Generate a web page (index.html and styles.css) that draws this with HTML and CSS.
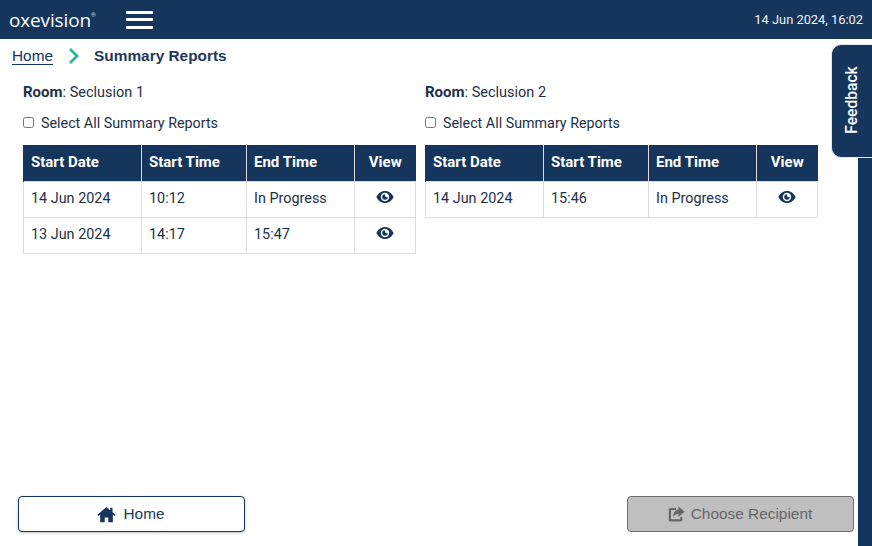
FILE: index.html
```html
<!DOCTYPE html>
<html lang="en">
<head>
<meta charset="utf-8">
<title>Summary Reports</title>
<link rel="stylesheet" href="styles.css">
</head>
<body>
<header class="topbar">
  <div class="brand"><span class="logo">oxevision</span><sup class="reg">®</sup></div>
  <button class="burger" aria-label="Menu"><span></span><span></span><span></span></button>
  <div class="clock">14 Jun 2024, 16:02</div>
</header>
<div class="strip"></div>
<a class="feedback"><span>Feedback</span></a>
<main class="page">
  <nav class="crumbs">
    <a class="crumb-link">Home</a>
    <svg class="chev" width="12" height="18" viewBox="0 0 12 18"><path d="M2 2 L9 9 L2 16" fill="none" stroke="#2fb593" stroke-width="2.8"/></svg>
    <strong class="crumb-current">Summary Reports</strong>
  </nav>
  <div class="rooms">
    <section class="room">
      <p class="room-title"><b>Room</b>: Seclusion 1</p>
      <label class="select-all"><input type="checkbox"><span>Select All Summary Reports</span></label>
      <table class="reports">
        <thead><tr><th class="c1">Start Date</th><th class="c2">Start Time</th><th class="c3">End Time</th><th class="c4">View</th></tr></thead>
        <tbody>
          <tr><td>14 Jun 2024</td><td>10:12</td><td>In Progress</td><td class="eye-cell"><svg class="eye" viewBox="0 0 18 14" width="18" height="14"><path fill-rule="evenodd" d="M9 1C5 1 2 3.6.4 7 2 10.4 5 13 9 13s7-2.6 8.600-6C16 3.600 13 1 9 1zm0 10.200A4.200 4.200 0 1 1 9 2.800a4.200 4.200 0 0 1 0 8.400z"/><path fill-rule="evenodd" d="M9 4.200A2.800 2.800 0 1 0 11.800 7c-.9.5-2 .2-2.500-.6-.5-.7-.5-1.500-.3-2.200z"/></svg></td></tr>
          <tr><td>13 Jun 2024</td><td>14:17</td><td>15:47</td><td class="eye-cell"><svg class="eye" viewBox="0 0 18 14" width="18" height="14"><path fill-rule="evenodd" d="M9 1C5 1 2 3.6.4 7 2 10.4 5 13 9 13s7-2.6 8.600-6C16 3.600 13 1 9 1zm0 10.200A4.200 4.200 0 1 1 9 2.800a4.200 4.200 0 0 1 0 8.400z"/><path fill-rule="evenodd" d="M9 4.200A2.800 2.800 0 1 0 11.800 7c-.9.5-2 .2-2.500-.6-.5-.7-.5-1.500-.3-2.200z"/></svg></td></tr>
        </tbody>
      </table>
    </section>
    <section class="room">
      <p class="room-title"><b>Room</b>: Seclusion 2</p>
      <label class="select-all"><input type="checkbox"><span>Select All Summary Reports</span></label>
      <table class="reports">
        <thead><tr><th class="c1">Start Date</th><th class="c2">Start Time</th><th class="c3">End Time</th><th class="c4">View</th></tr></thead>
        <tbody>
          <tr><td>14 Jun 2024</td><td>15:46</td><td>In Progress</td><td class="eye-cell"><svg class="eye" viewBox="0 0 18 14" width="18" height="14"><path fill-rule="evenodd" d="M9 1C5 1 2 3.6.4 7 2 10.4 5 13 9 13s7-2.6 8.600-6C16 3.600 13 1 9 1zm0 10.200A4.200 4.200 0 1 1 9 2.800a4.200 4.200 0 0 1 0 8.400z"/><path fill-rule="evenodd" d="M9 4.200A2.800 2.800 0 1 0 11.800 7c-.9.5-2 .2-2.500-.6-.5-.7-.5-1.500-.3-2.200z"/></svg></td></tr>
        </tbody>
      </table>
    </section>
  </div>
  <footer class="actions">
    <button class="btn btn-home">
      <svg class="btn-icon" viewBox="0 0 18 16" width="19" height="17"><path fill="#15355c" d="M9 .8 .4 8.300l1 1.100L3 8v7.400h4.300v-4.600h3.400v4.600H15V8l1.600 1.400 1-1.100-2.900-2.500V1.600h-2.200v2.300z"/></svg>
      <span>Home</span>
    </button>
    <button class="btn btn-recipient" disabled>
      <svg class="btn-icon" viewBox="0 0 17 16" width="17" height="16"><path fill="#666" d="M2.500 2h5.500v2H3v9.300h9.300V11h2v2.800c0 1-.7 1.700-1.700 1.700H2.500C1.500 15.500.8 14.800.8 13.800V3.700C.8 2.700 1.500 2 2.500 2z"/><path fill="#666" d="M10.500.5 16.500 5.800 10.500 11V8C7.800 8 6.300 8.700 5.300 11.500 5 7.300 7 3.800 10.500 3.500z"/></svg>
      <span>Choose Recipient</span>
    </button>
  </footer>
</main>
</body>
</html>
```
FILE: styles.css
```css
* { box-sizing: border-box; }
html, body { margin: 0; height: 100%; }
body {
  width: 872px;
  height: 546px;
  overflow: hidden;
  display: flex;
  flex-direction: column;
  position: relative;
  background: #fff;
  color: #1d2f49;
  font-family: Roboto, sans-serif;
  font-size: 14.3px;
}
.topbar {
  height: 39px;
  flex: none;
  background: #15355c;
  color: #fff;
  display: flex;
  align-items: center;
  padding: 0 9px;
}
.brand { display: flex; align-items: flex-start; width: 117px; }
.logo {
  font-family: "Open Sans", sans-serif;
  font-weight: 400;
  font-size: 19px;
  line-height: 20px;
  letter-spacing: -0.15px;
}
.reg { font-size: 6px; line-height: 8px; margin: 1px 0 0 0; color: #cfd6df; }
.burger {
  width: 27px;
  height: 18px;
  padding: 0;
  border: 0;
  background: none;
  display: flex;
  flex-direction: column;
  justify-content: space-between;
}
.burger span { display: block; height: 3px; background: #fff; border-radius: 1px; }
.clock { margin-left: auto; font-size: 12.85px; color: #f2f4f7; }
.strip {
  position: absolute;
  right: 0;
  top: 44px;
  bottom: 0;
  width: 14px;
  background: #15355c;
}
.feedback {
  position: absolute;
  right: 0;
  top: 44px;
  width: 41px;
  height: 114px;
  background: #15355c;
  border-radius: 10px 0 0 10px;
  border: 1px solid #e3e7ec;
  border-right: 0;
  color: #fff;
  font-weight: 500;
  font-size: 15.6px;
  display: flex;
  align-items: center;
  justify-content: center;
  padding-bottom: 2px;
}
.feedback span { transform: rotate(-90deg); white-space: nowrap; }
.page {
  flex: 1;
  display: flex;
  flex-direction: column;
  padding: 0 18px 14px 12px;
  min-height: 0;
}
.crumbs {
  height: 33px;
  display: flex;
  align-items: center;
  font-family: "Liberation Sans", sans-serif;
  font-size: 15.4px;
}
.crumb-link {
  color: #15355c;
  border-bottom: 1px solid #15355c;
  line-height: 16px;
  margin-top: 1px;
}
.chev { margin: 0 14px 0 15px; }
.crumb-current { color: #22385a; font-weight: 700; }
.rooms { display: flex; gap: 10px; padding-left: 11px; flex: 1; }
.room { width: 392px; }
.room-title { margin: 4px 0 0; line-height: 33px; height: 33px; font-size: 14.5px; }
.room-title b { font-weight: 700; font-size: 15px; }
.select-all {
  display: flex;
  align-items: center;
  height: 29px;
  margin-top: -1px;
  margin-bottom: 8px;
  gap: 7px;
}
.select-all input { margin: 0; width: 11px; height: 11px; }
.reports { border-collapse: collapse; width: 392px; table-layout: fixed; }
.reports th {
  background: #15355c;
  color: #fff;
  font-weight: 700;
  font-size: 15px;
  height: 36px;
  text-align: left;
  padding: 0 7px 2px;
  border-left: 1px solid #dcdcdc;
}
.reports th:first-child { border-left-color: #15355c; }
.reports th:last-child { text-align: center; padding: 0 0 2px; }
.reports td {
  height: 36px;
  font-size: 14.4px;
  padding: 0 7px 2px;
  border: 1px solid #dcdcdc;
}
.reports .eye-cell { text-align: center; padding: 0 0 4px; }
.eye { display: block; margin: 0 auto; fill: #15355c; }
.c1 { width: 118px; }
.c2 { width: 105px; }
.c3 { width: 108px; }
.c4 { width: 61px; }
.actions { display: flex; justify-content: space-between; padding-left: 6px; padding-right: 0; }
.btn {
  width: 227px;
  height: 36px;
  border-radius: 4px;
  font-family: "Liberation Sans", sans-serif;
  font-size: 15.4px;
  display: flex;
  align-items: center;
  justify-content: center;
  gap: 7px;
  padding: 0 1px 0 0;
}
.btn-home {
  background: #fff;
  border: 1px solid #15355c;
  color: #22385a;
  box-shadow: 0 1px 3px rgba(0,0,0,.25);
}
.btn-recipient {
  background: #bfbfbf;
  border: 1px solid #6b6b6b;
  color: #666;
  gap: 6px;
}
```
